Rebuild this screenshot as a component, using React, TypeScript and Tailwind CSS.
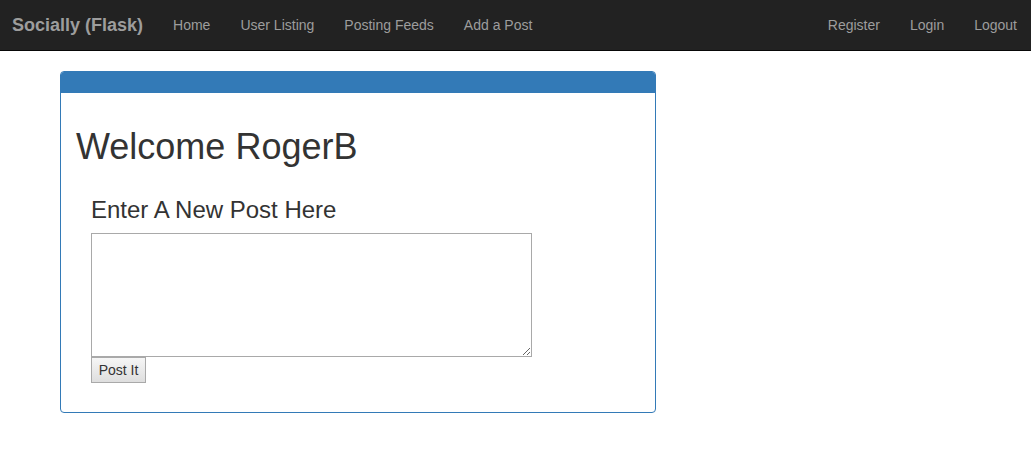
import React from "react";

export default function App() {
  const left = ["Home", "User Listing", "Posting Feeds", "Add a Post"];
  const right = ["Register", "Login", "Logout"];
  return (
    <div className="min-h-[458px] bg-white text-[#333] text-[14px] leading-[20px]" style={{ fontFamily: '"Liberation Sans", Arial, Helvetica, sans-serif' }}>
      <nav className="h-[51px] bg-[#222] border-b border-[#080808] flex items-start justify-between">
        <div className="flex items-start">
          <a className="block pl-[12px] pr-[15px] py-[15px] text-[18px] leading-[20px] font-bold text-[#9d9d9d]">Socially (Flask)</a>
          {left.map((l) => (
            <a key={l} className="block px-[15px] py-[15px] text-[#9d9d9d]">{l}</a>
          ))}
        </div>
        <div className="flex items-start">
          {right.map((l, i) => (
            <a key={l} className={i === right.length - 1 ? "block pl-[15px] pr-[14px] py-[15px] text-[#9d9d9d]" : "block px-[15px] py-[15px] text-[#9d9d9d]"}>{l}</a>
          ))}
        </div>
      </nav>
      <div className="pl-[60px] pt-[20px]">
        <div className="w-[596px] h-[342px] border border-[#337ab7] rounded-[4px] overflow-hidden">
          <div className="h-[21px] bg-[#337ab7]" />
          <div className="pl-[15px] pr-[15px]">
            <h1 className="pt-[34px] text-[36px] leading-[1.1] font-normal">Welcome RogerB</h1>
            <div className="pl-[15px] pt-[30px]">
              <h3 className="text-[24px] leading-[1.1] font-normal">Enter A New Post Here</h3>
              <textarea className="block mt-[10px] w-[441px] h-[124px] border border-[#a9a9a9] bg-white" />
              <button className="block h-[26px] w-[55px] border border-[#a9a9a9] bg-gradient-to-b from-[#f6f6f6] to-[#dedede] text-[14px] leading-[20px] text-[#333] text-center">Post It</button>
            </div>
          </div>
        </div>
      </div>
    </div>
  );
}
